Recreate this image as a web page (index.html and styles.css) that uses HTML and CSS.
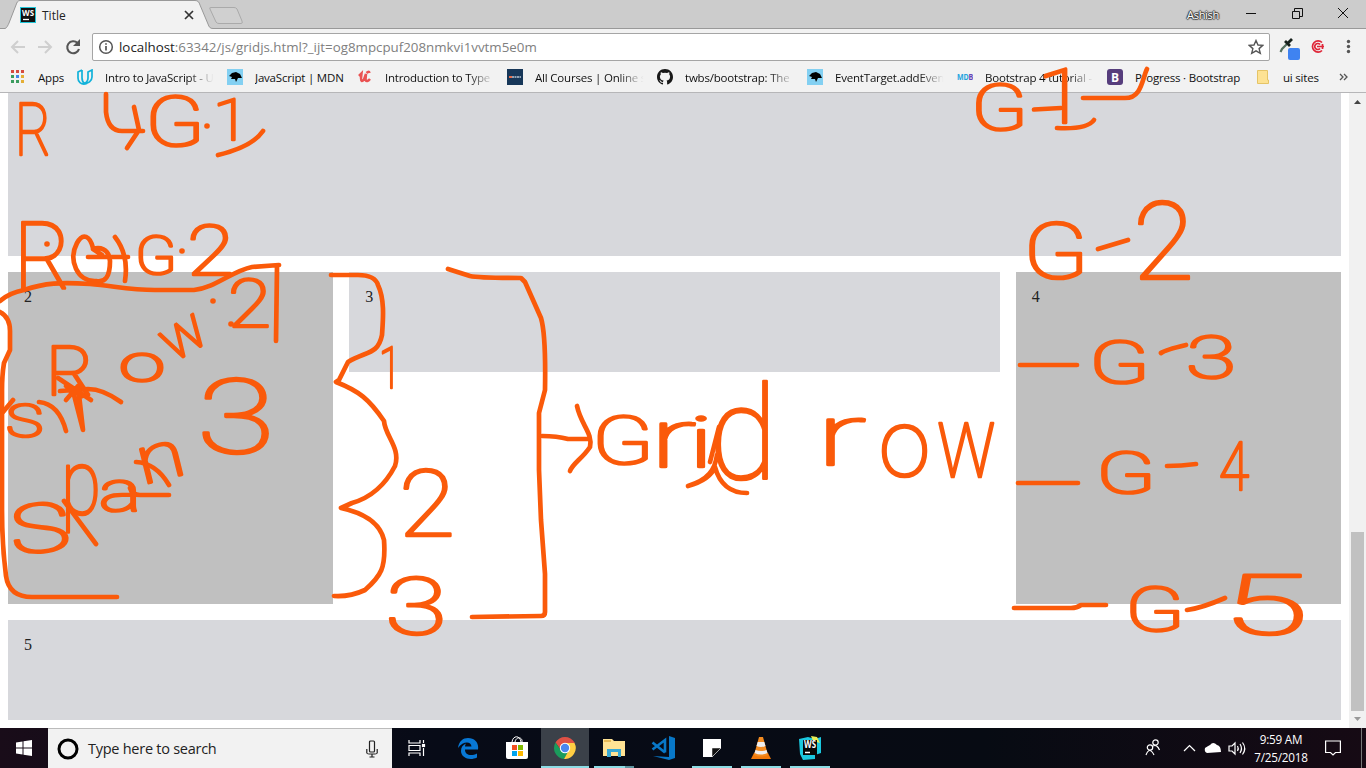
FILE: index.html
```html
<!DOCTYPE html>
<html lang="en">
<head>
<meta charset="utf-8">
<title>Title</title>
<link rel="stylesheet" href="styles.css">
</head>
<body>
<div class="screen">
  <header class="tabstrip">
    <svg class="tabshape" width="245" height="29" viewBox="0 0 245 29">
      <path d="M0 28.5H5C7 28 8 25 9 23L16 5C17 2 18 .5 20 .5H195C198 .5 199 2 200 5L208 24C209 27 210 28.500 213 28.500V29H0Z" fill="#f2f2f2"/>
      <path d="M0 28.500H5C7 28 8 25 9 23L16 5C17 2 18 .5 20 .5H195C198 .5 199 2 200 5L208 24C209 27 210 28.500 213 28.500H245" fill="none" stroke="#999"/>
      <path d="M211 7.500H234Q236 7.500 237 9L242 21Q243 23.500 241 23.500H219Q217 23.500 216 22L210 9Q209 7.500 211 7.500Z" fill="#d0d0d0" stroke="#aaa"/>
    </svg>
    <div class="tab">
      <svg width="16" height="16" viewBox="0 0 16 16"><rect width="16" height="16" fill="#20c5d8"/><rect x="1" y="1" width="14" height="14" fill="#111"/><text x="2" y="8.500" class="wsicon" textLength="12" lengthAdjust="spacingAndGlyphs">WS</text><path d="M3 12.500H9" stroke="#fff" stroke-width="1.300"/></svg>
      <span>Title</span>
      <svg class="tabclose" width="10" height="10" viewBox="0 0 10 10"><path d="M1 1L9 9M9 1L1 9" stroke="#333" stroke-width="1.700"/></svg>
    </div>
    <div class="winctl">
      <span class="user">Ashish</span>
      <svg width="120" height="28" viewBox="0 0 120 28" fill="none" stroke="#111"><path d="M10 13.500H20M56.500 11.500H63.500V18.500H56.500ZM58.500 11V8.500H66.500V16.500H64M102 8L112 18M112 8L102 18"/></svg>
    </div>
  </header>

  <div class="toolbar">
    <svg width="80" height="32" viewBox="0 0 80 32" fill="none">
      <g stroke="#cfcfcf" stroke-width="2"><path d="M15 17H2M8 11L2 17L8 23M28 17H41M35 11L41 17L35 23"/></g>
      <path d="M67.500 13A6 6 0 1 0 69 19" stroke="#555" stroke-width="2.100"/><path d="M70 9V16H63Z" fill="#555"/>
    </svg>
    <div class="omnibox">
      <svg width="16" height="16" viewBox="0 0 16 16"><circle cx="8" cy="8" r="6.300" fill="none" stroke="#555" stroke-width="1.500"/><path d="M8 7V11.500M8 4.200V5.800" stroke="#555" stroke-width="1.700"/></svg>
      <span class="url"><b>localhost</b>:63342/js/gridjs.html?_ijt=og8mpcpuf208nmkvi1vvtm5e0m</span>
      <svg width="16" height="16" viewBox="0 0 16 16"><path d="M8 1.500L10 6L14.800 6.400L11.100 9.600L12.300 14.300L8 11.800L3.700 14.300L4.900 9.600L1.200 6.400L6 6Z" fill="none" stroke="#555" stroke-width="1.400"/></svg>
    </div>
    <svg class="ext" width="90" height="32" viewBox="0 0 90 32">
      <path d="M4.500 21L6 18L12 12" stroke="#557060" stroke-width="2.200" fill="none"/><path d="M9 10L14 15M12 12L16 8" stroke="#17211d" stroke-width="2.800"/>
      <rect x="12" y="17" width="12" height="12" rx="2" fill="#3f83f1"/>
      <g fill="none" stroke="#df2638" stroke-width="1.700"><path d="M46 11.500A5.600 5.600 0 1 0 46 19.500"/><path d="M44 13.500A3 3 0 1 0 44 17.500M41 15.500H48M46.500 13V18"/></g>
      <g fill="#555"><circle cx="72.500" cy="10.500" r="1.700"/><circle cx="72.500" cy="15.500" r="1.700"/><circle cx="72.500" cy="20.500" r="1.700"/></g>
    </svg>
  </div>

  <nav class="bookmarks">
    <div class="bm apps"><svg width="14" height="14" viewBox="0 0 14 14"><path d="M0 0H3V3H0ZM5 0H8V3H5ZM10 0H13V3H10Z" fill="#d64b40"/><path d="M0 5H3V8H0ZM5 10H8V13H5Z" fill="#3c9c5f"/><path d="M5 5H8V8H5Z" fill="#4285e8"/><path d="M10 5H13V8H10ZM10 10H13V13H10Z" fill="#e4ae35"/><path d="M0 10H3V13H0Z" fill="#3c9c5f"/></svg><span>Apps</span></div>
    <div class="bm fade"><svg width="16" height="16" viewBox="0 0 16 16"><path d="M5 1L1 3V9C1 13 4 15.500 8 15C5 13 5 11 5 9V1M7 14.500C11 15 15 12 15 8V1L11 3V9Q11 13 7 14.500" fill="none" stroke="#12b2da" stroke-width="1.700"/></svg><span>Intro to JavaScript - U</span></div>
    <div class="bm"><svg width="16" height="16" viewBox="0 0 16 16"><rect width="16" height="16" fill="#83d0f2"/><path d="M2 7L5 4L9 3L13 5L15 9L11 9L9 13L8 10L4 10L5 8Z"/></svg><span>JavaScript | MDN</span></div>
    <div class="bm fade"><svg width="16" height="16" viewBox="0 0 16 16"><path d="M2 7L4.500 4.500L4 9Q4 14 7 10.500L9 5L8.500 11Q10 13.500 13 10M9.500 4Q12 1.500 12.500 4" fill="none" stroke="#ea5252" stroke-width="2.500"/></svg><span>Introduction to Type</span></div>
    <div class="bm fade"><svg width="16" height="16" viewBox="0 0 16 16"><rect width="16" height="16" fill="#173759"/><path d="M2 8H5" stroke="#e66c4c" stroke-width="2"/><path d="M5 8H14" stroke="#b9c6d4" stroke-width="1.600" stroke-dasharray="2 .5"/></svg><span>All Courses | Online s</span></div>
    <div class="bm fade"><svg width="16" height="16" viewBox="0 0 16 16"><path d="M8 0C3.500 0 0 3.500 0 8C0 11.500 2.200 14.400 5.400 15.500C5.800 15.600 6 15.400 6 15.100V13.800C3.800 14.200 3.300 12.800 3.300 12.800C3 12 2.500 11.700 2.500 11.700C1.800 11.200 3.500 10.900 4.100 12.200C4.700 13.200 5.700 12.900 6.100 12.700C6.100 12.100 6.400 11.800 6.600 11.600C4.400 11.300 2.900 10.400 2.900 7.600C2.900 6.700 3.200 5.900 3.800 5.400C3.700 4.900 3.500 4.200 3.900 3.200C3.900 3.200 4.600 3 6 4Q8 3.400 10 4C11.500 3 12.200 3.200 12.200 3.200C12.500 4.200 12.300 4.900 12.300 5.400C12.800 6 13.100 6.700 13.100 7.600C13.100 10.400 11.600 11.300 9.500 11.600C9.900 11.900 10.100 12.400 10.100 13.200V15.100C10.100 15.400 10.300 15.600 10.700 15.500C13.800 14.400 16 11.500 16 8C16 3.500 12.500 0 8 0Z" fill="#181818"/></svg><span>twbs/bootstrap: The</span></div>
    <div class="bm fade"><svg width="16" height="16" viewBox="0 0 16 16"><rect width="16" height="16" fill="#83d0f2"/><path d="M2 7L5 4L9 3L13 5L15 9L11 9L9 13L8 10L4 10L5 8Z"/></svg><span>EventTarget.addEven</span></div>
    <div class="bm fade"><svg width="16" height="16" viewBox="0 0 16 16"><text x="0" y="10.500" class="mdb" textLength="16" lengthAdjust="spacingAndGlyphs"><tspan fill="#24a4df">MD</tspan><tspan fill="#6944b7">B</tspan></text></svg><span>Bootstrap 4 tutorial -</span></div>
    <div class="bm boot"><svg width="16" height="16" viewBox="0 0 16 16"><rect width="16" height="16" rx="3" fill="#563d7c"/><text x="4" y="12.500" class="bicon">B</text></svg><span>Progress · Bootstrap</span></div>
    <div class="bm folder"><svg width="12" height="14" viewBox="0 0 12 14"><path d="M.5.5H10.500V10H11.500V13.500H.5Z" fill="#fde293" stroke="#e5c466"/></svg><span>ui sites</span></div>
    <svg class="more" width="9" height="8" viewBox="0 0 9 8"><path d="M1 1L4 4L1 7M5 1L8 4L5 7" fill="none" stroke="#555" stroke-width="1.300"/></svg>
  </nav>

  <main class="viewport">
    <div class="grid">
      <div class="cell wide"></div>
      <div class="cell tall">2</div>
      <div class="cell">3</div>
      <div class="cell tall">4</div>
      <div class="cell wide">5</div>
    </div>
    <aside class="scrollbar">
      <svg width="7" height="4" viewBox="0 0 7 4"><path d="M0 4L3.500 0L7 4Z" fill="#444"/></svg>
      <div class="thumb"></div>
      <svg width="7" height="4" viewBox="0 0 7 4"><path d="M0 0H7L3.500 4Z" fill="#999"/></svg>
    </aside>
  </main>

  <footer class="taskbar">
    <div class="start"><svg width="16" height="16" viewBox="0 0 16 16" fill="#fff"><path d="M0 2.500L6.500 1.500V7.500H0ZM7.500 1.300L16 0V7.500H7.500ZM0 8.500H6.500V14.500L0 13.500ZM7.500 8.500H16V16L7.500 14.700Z"/></svg></div>
    <div class="search"><svg width="22" height="22" viewBox="0 0 22 22"><circle cx="11" cy="11" r="9" fill="none" stroke="#000" stroke-width="3"/></svg><span>Type here to search</span><svg width="12" height="18" viewBox="0 0 12 18" fill="none" stroke="#222" stroke-width="1.200"><rect x="3.500" y="1" width="5" height="11" rx="1"/><path d="M.8 9V13Q1 14 3 14H9Q11 14 11.200 13V9M6 14V17M3.500 17H8.500"/></svg></div>
    <div class="task view"><svg width="18" height="16" viewBox="0 0 18 16" fill="none" stroke="#fff" stroke-width="1.200"><path d="M1 0V3H12V0M1 5.500H12V10.500H1ZM1 16V13H12V16M15.500 0V3M15.500 8V16"/><rect x="14.500" y="4.500" width="2" height="2" fill="#fff"/></svg></div>
    <div class="task"><svg width="22" height="22" viewBox="0 0 22 22"><path d="M1 11C2 4 6 1 11 1C18 1 22 6 21 12.500H8C8 19 15 19 20 16.500V20.500C13 24 4 21 4 14C4 10 6 8 9 6.500Q8 8 8 9.500H14.500C14 4 6 4 1 11Z" fill="#0878d5"/></svg></div>
    <div class="task"><svg width="24" height="24" viewBox="0 0 24 24"><path d="M7 6C8-1 15-1 16 6M10 6C11 0 18 1 17 6" stroke="#fff" fill="none"/><path d="M1 6H23V21Q23 23 21 23H3Q1 23 1 21Z" fill="#fff"/><path d="M7 9H12V14H7Z" fill="#f25022"/><path d="M13 9H18V14H13Z" fill="#7fba00"/><path d="M7 15H12V20H7Z" fill="#00a4ef"/><path d="M13 15H18V20H13Z" fill="#ffb900"/></svg></div>
    <div class="task active open"><svg width="22" height="22" viewBox="0 0 22 22"><path d="M1.500 5.500A11 11 0 0 1 20.500 5.500L21 6H11L7 13Z" fill="#df5145"/><path d="M1.500 5.500A11 11 0 0 0 10 22L15 13.500L7 13.500Z" fill="#1b9c5c"/><path d="M20.500 6A11 11 0 0 1 10 22L15.500 12L11 6Z" fill="#ffce43"/><circle cx="11" cy="11" r="5.200" fill="#fff"/><circle cx="11" cy="11" r="4.200" fill="#4b87ee"/></svg></div>
    <div class="task open multi"><svg width="22" height="20" viewBox="0 0 22 20"><path d="M0 1H9L11 3H22V18H0Z" fill="#ffe394"/><path d="M1 3H8" stroke="#dfae44" stroke-width="1.500"/><path d="M4 19V11H18V19H15V14H8V19Z" fill="#38a9d4"/></svg></div>
    <div class="task"><svg width="24" height="24" viewBox="0 0 24 24" fill="#0878c8"><path d="M18 0L24 2V22L18 24L2 20L18 21Z"/><path d="M1.500 6.500L14 16.500M1.500 13.500L14 4V16.500" fill="none" stroke="#0878c8" stroke-width="2.600"/></svg></div>
    <div class="task open"><svg width="18" height="18" viewBox="0 0 18 18"><path d="M0 0H18V9L9 18H0Z" fill="#fff"/><path d="M9 18V9H18Z" fill="#111" stroke="#fff" stroke-width=".5"/></svg></div>
    <div class="task open"><svg width="22" height="24" viewBox="0 0 22 24"><path d="M1 23L4 17H18L21 23Z" fill="#f07809"/><path d="M9 1H13L18 19Q11 22 4 19Z" fill="#f28b20"/><path d="M7.700 6H14.300L15.500 10Q11 12 6.500 10ZM5.500 14Q11 16 16.500 14L17.500 17Q11 20 4.500 17Z" fill="#eee"/></svg></div>
    <div class="task open"><svg width="24" height="24" viewBox="0 0 24 24"><path d="M1 3L10 1L17 3L23 1V17L17 19V23L5 24L2 18Z" fill="#1bc8df"/><path d="M13 0L19 1L22 7L15 5Z" fill="#e7ed56"/><rect x="5" y="4" width="14" height="15" fill="#080808"/><text x="6" y="12" class="wsbig" textLength="12" lengthAdjust="spacingAndGlyphs">WS</text><path d="M7 16.500H12" stroke="#fff" stroke-width="1.500"/></svg></div>
    <div class="tray">
      <svg width="110" height="20" viewBox="0 0 110 20" fill="none" stroke="#fff" stroke-width="1.200"><circle cx="11.500" cy="4.500" r="2.700"/><path d="M9 8Q13 6 15.500 12"/><circle cx="6" cy="9.500" r="2.700"/><path d="M2 17Q5.500 8 10 17M40 13L45.500 7.500L51 13"/><path d="M63 15Q60 14 61 10Q64 8 66 7Q69 3 73 7Q77 8 77 14Z" fill="#fff" stroke="none"/><path d="M85 8H88L91 5V16L88 13H85ZM93.500 8Q95 10.500 93.500 13M96 6Q99 10.500 96 15M98.500 4.500Q103 10.500 98.500 16.500"/></svg>
      <div class="clock"><span>9:59 AM</span><span>7/25/2018</span></div>
      <svg width="16" height="16" viewBox="0 0 16 16" fill="none" stroke="#fff" stroke-width="1.200"><path d="M.6 1H15.400V12.500H10.500L8 15L5.500 12.500H.6Z"/></svg>
      <i class="peek"></i>
    </div>
  </footer>

  <svg class="ink" width="1366" height="768" viewBox="0 0 1366 768">
    <g class="marks">
      <path d="M106 94V112Q108 131 122 131H143M134 107L139 130L127 148"/>
      <path d="M218 155Q252 147 263 131"/>
      <path d="M93 248C90 236 83 232 77 243C68 260 77 282 96 281Q110 284 110 261C109 248 99 247 93 249L102 255M88 257H128M115 237Q129 255 125 281"/>
      <path d="M0 301Q9 293 24 290C45 283 60 282 90 284C114 286 130 290 155 290H194C215 288 232 271 252 267L279 265M277 267L276 341"/>
      <path d="M0 312Q10 317 10 331V350L4 363Q2 375 2 390V510Q2 545 6 576Q9 597 32 597H117"/>
      <path d="M60 391L88 389Q103 389 121 402M58 378L91 400M66 400L78 386L83 430L74 395M66 386L82 396"/>
      <path d="M3 412L13 400M39 402Q59 404 66 431M64 501L96 544M130 488Q132 495 140 495H169M136 462Q156 463 169 485"/>
      <path d="M331 275H358Q375 275 378 285C385 300 383 320 382 335C378 355 366 351 348 362L339 380L336 382C359 391 369 399 384 421C385 436 401 448 395 466Q380 495 352 503L341 508C364 513 380 523 384 540C386 568 381 576 365 590Q350 597 334 596"/>
      <path d="M448 269L470 276Q479 278 521 278L525 282L541 318Q546 335 545 390L539 413V470L541 520L545 574V612Q545 616 541 616L472 617"/>
      <path d="M542 436Q557 436 568 439H588M577 406C581 425 593 433 590 447C582 459 573 463 570 471"/>
      <path d="M719 427L710 462M717 455C715 470 708 480 688 486Q710 480 715 467Q722 493 747 493"/>
      <path d="M1034 109.500L1061 108M1057 128C1076 129 1089 127 1094 120M1083 98H1125C1142 98 1142 79 1147 69"/>
      <path d="M1098 249L1128 240M1020 365H1077M1161 353Q1165 350 1186 345M1018 483H1078M1167 466Q1181 466 1196 464M1014 608H1071Q1077 608 1081 605H1106M1187 610Q1202 608 1225 598"/>
    </g>
    <g class="dots"><circle cx="207" cy="126" r="2.800"/><circle cx="47" cy="244" r="2.800"/><circle cx="182" cy="251" r="2.800"/><circle cx="213" cy="301" r="2.800"/><circle cx="231" cy="324" r="2.800"/></g>
    <g class="hand">
      <text x="15" y="155" font-size="73" textLength="36" lengthAdjust="spacingAndGlyphs">R</text>
      <text x="145" y="146" font-size="70" textLength="60" lengthAdjust="spacingAndGlyphs">G</text>
      <text x="213" y="140" font-size="58" textLength="36" lengthAdjust="spacingAndGlyphs">1</text>
      <text x="14" y="288" font-size="92" textLength="57" lengthAdjust="spacingAndGlyphs">R</text>
      <text x="135" y="274" font-size="54" textLength="42" lengthAdjust="spacingAndGlyphs">G</text>
      <text x="187" y="275" font-size="71" textLength="47" lengthAdjust="spacingAndGlyphs">2</text>
      <text x="228" y="327" font-size="66" textLength="43" lengthAdjust="spacingAndGlyphs">2</text>
      <text x="46" y="395" font-size="68" textLength="48" lengthAdjust="spacingAndGlyphs">R</text>
      <text x="119" y="381" font-size="52" textLength="46" lengthAdjust="spacingAndGlyphs">o</text>
      <text font-size="60" textLength="45" lengthAdjust="spacingAndGlyphs" transform="translate(173 363) rotate(-31)">w</text>
      <text x="6" y="437" font-size="46" textLength="37" lengthAdjust="spacingAndGlyphs">S</text>
      <text x="10" y="552" font-size="68" textLength="60" lengthAdjust="spacingAndGlyphs" transform="rotate(-5 40 530)">S</text>
      <text x="61" y="514" font-size="90" textLength="40" lengthAdjust="spacingAndGlyphs">p</text>
      <text x="99" y="511" font-size="57" textLength="42" lengthAdjust="spacingAndGlyphs">a</text>
      <text x="139" y="480" font-size="66" textLength="48" lengthAdjust="spacingAndGlyphs" transform="rotate(-14 160 470)">n</text>
      <text x="197" y="453" font-size="104" textLength="78" lengthAdjust="spacingAndGlyphs">3</text>
      <text x="379" y="388" font-size="58" textLength="22" lengthAdjust="spacingAndGlyphs">1</text>
      <text x="399" y="536" font-size="92" textLength="56" lengthAdjust="spacingAndGlyphs">2</text>
      <text x="385" y="634" font-size="80" textLength="62" lengthAdjust="spacingAndGlyphs">3</text>
      <text x="592" y="464" font-size="66" textLength="62" lengthAdjust="spacingAndGlyphs">G</text>
      <text x="650" y="467" font-size="82" textLength="46" lengthAdjust="spacingAndGlyphs">r</text>
      <text x="688" y="467" font-size="70" textLength="26" lengthAdjust="spacingAndGlyphs">i</text>
      <text x="709" y="479" font-size="130" textLength="68" lengthAdjust="spacingAndGlyphs">d</text>
      <text x="816" y="465" font-size="86" textLength="50" lengthAdjust="spacingAndGlyphs">r</text>
      <text x="879" y="476" font-size="94" textLength="51" lengthAdjust="spacingAndGlyphs">o</text>
      <text x="936" y="477" font-size="102" textLength="61" lengthAdjust="spacingAndGlyphs">w</text>
      <text x="971" y="130" font-size="64" textLength="57" lengthAdjust="spacingAndGlyphs">G</text>
      <text x="1037" y="123" font-size="76" textLength="49" lengthAdjust="spacingAndGlyphs">1</text>
      <text x="1023" y="278" font-size="78" textLength="66" lengthAdjust="spacingAndGlyphs">G</text>
      <text x="1133" y="279" font-size="107" textLength="61" lengthAdjust="spacingAndGlyphs">2</text>
      <text x="1089" y="383" font-size="59" textLength="61" lengthAdjust="spacingAndGlyphs">G</text>
      <text x="1186" y="378" font-size="60" textLength="50" lengthAdjust="spacingAndGlyphs">3</text>
      <text x="1096" y="493" font-size="58" textLength="60" lengthAdjust="spacingAndGlyphs">G</text>
      <text x="1219" y="490" font-size="67" textLength="30" lengthAdjust="spacingAndGlyphs">4</text>
      <text x="1125" y="631" font-size="61" textLength="60" lengthAdjust="spacingAndGlyphs">G</text>
      <text x="1222" y="634" font-size="83" textLength="86" lengthAdjust="spacingAndGlyphs">5</text>
    </g>
  </svg>
</div>
</body>
</html>
```
FILE: styles.css
```css
* { box-sizing: border-box; }
body { margin: 0; background: #fff; font-family: "Open Sans", "Noto Sans", sans-serif; font-size: 12px; color: #222; }
svg { display: block; flex: none; }
.screen { position: relative; display: flex; flex-direction: column; width: 1366px; height: 768px; overflow: hidden; }
.tabstrip { position: relative; display: flex; justify-content: space-between; height: 29px; background: #ccc; border-bottom: 1px solid #999; }
.tabshape { position: absolute; left: 0; top: 0; }
.tab { position: relative; display: flex; align-items: center; width: 200px; height: 29px; padding: 1px 6px 0 20px; gap: 6px; }
.tabclose { margin-left: auto; }
.winctl { display: flex; align-items: center; gap: 17px; }
.user { color: #fff; font-size: 11px; letter-spacing: -.3px; text-shadow: 1px 0 1px #333, -1px 0 1px #333, 0 1px 1px #333, 0 -1px 1px #333; }
.winctl svg { margin-right: 10px; }
.wsicon, .wsbig, .mdb, .bicon { font-family: "Open Sans", sans-serif; font-weight: 700; }
.wsicon { font-size: 8px; fill: #fff; }
.wsbig { font-size: 10px; fill: #fff; }
.mdb { font-size: 8px; }
.bicon { font-size: 12px; fill: #fff; }
.toolbar { display: flex; align-items: center; height: 33px; padding-left: 10px; background: #f2f2f2; }
.omnibox { display: flex; align-items: center; width: 1178px; height: 28px; margin: 3px 0 0 2px; padding: 0 5px; gap: 5px; background: #fff; border: 1px solid #a5a5a5; border-radius: 2px; }
.url { flex: 1; font-size: 13.340px; color: #808080; white-space: nowrap; }
.url b { color: #222; font-weight: 400; }
.ext { margin: 3px 0 0 6px; }
.bookmarks { display: flex; align-items: center; height: 31px; padding-left: 11px; background: #f2f2f2; border-bottom: 1px solid #b6b6b8; }
.bm { display: flex; align-items: center; gap: 12px; width: 150px; color: #111; font-size: 11.500px; letter-spacing: -.2px; white-space: nowrap; }
.bm span { width: 112px; overflow: hidden; }
.fade span { -webkit-mask-image: linear-gradient(90deg, #000 75%, transparent 97%); mask-image: linear-gradient(90deg, #000 75%, transparent 97%); }
.apps { width: 66px; gap: 13px; }
.bm:nth-child(3) { width: 130px; }
.folder { width: 82px; gap: 14px; }
.folder span, .apps span { width: auto; }
.viewport { display: flex; height: 635px; background: #fff; overflow: hidden; }
.grid { display: grid; width: 1349px; padding: 0 8px; grid-template-columns: 1fr 2fr 1fr; grid-template-rows: 163px 332px 100px; gap: 16px; font: 16px "Liberation Serif", serif; }
.cell { height: 100px; padding: 16px; background: #d7d8dc; line-height: 18px; }
.wide { grid-column: 1 / -1; }
.wide:first-child { height: 163px; }
.tall { height: 332px; background: #c0c0c0; }
.scrollbar { display: flex; flex-direction: column; align-items: center; width: 17px; padding: 7px 0 6px; background: #f1f1f1; }
.thumb { width: 13px; height: 179px; margin: 428px 0 6px; background: #c1c1c1; }
.taskbar { display: flex; height: 40px; background: linear-gradient(90deg, #190c19 0, #070b17 32%, #070b13 72%, #160a14); }
.start { display: flex; align-items: center; justify-content: center; width: 48px; }
.search { display: flex; align-items: center; width: 344px; padding: 0 14px 0 9px; gap: 9px; background: #f2f2f2; border-top: 1px solid #bbb; font-size: 14.500px; letter-spacing: -.26px; }
.search span { flex: 1; }
.task { position: relative; display: flex; align-items: center; justify-content: center; width: 49px; height: 40px; }
.view { width: 51px; padding-right: 2px; }
.active { width: 48px; background: #3b4149; }
.open::after { content: ""; position: absolute; bottom: 0; left: 5px; right: 4px; height: 2px; background: #8cdce4; }
.active::after { left: 0; right: 0; }
.multi::after { background: linear-gradient(90deg, #8cdce4 78%, #5c929d 78%); }
.tray { display: flex; align-items: center; width: 222px; margin-left: auto; color: #fff; }
.clock { display: flex; flex-direction: column; align-items: center; width: 62px; margin: 0 13px 0 -4px; line-height: 18px; font-size: 11.700px; letter-spacing: -.2px; }
.peek { width: 1px; height: 40px; margin-left: 20px; background: #777; }
.ink { position: absolute; inset: 0; pointer-events: none; }
.marks { fill: none; stroke: #fa5a0a; stroke-width: 4.700; stroke-linecap: round; stroke-linejoin: round; }
.dots { fill: #fa5a0a; }
.hand { fill: #fa5a0a; stroke: #fa5a0a; stroke-width: 2.700; stroke-linejoin: round; font-family: Roboto, sans-serif; font-weight: 100; }
```
